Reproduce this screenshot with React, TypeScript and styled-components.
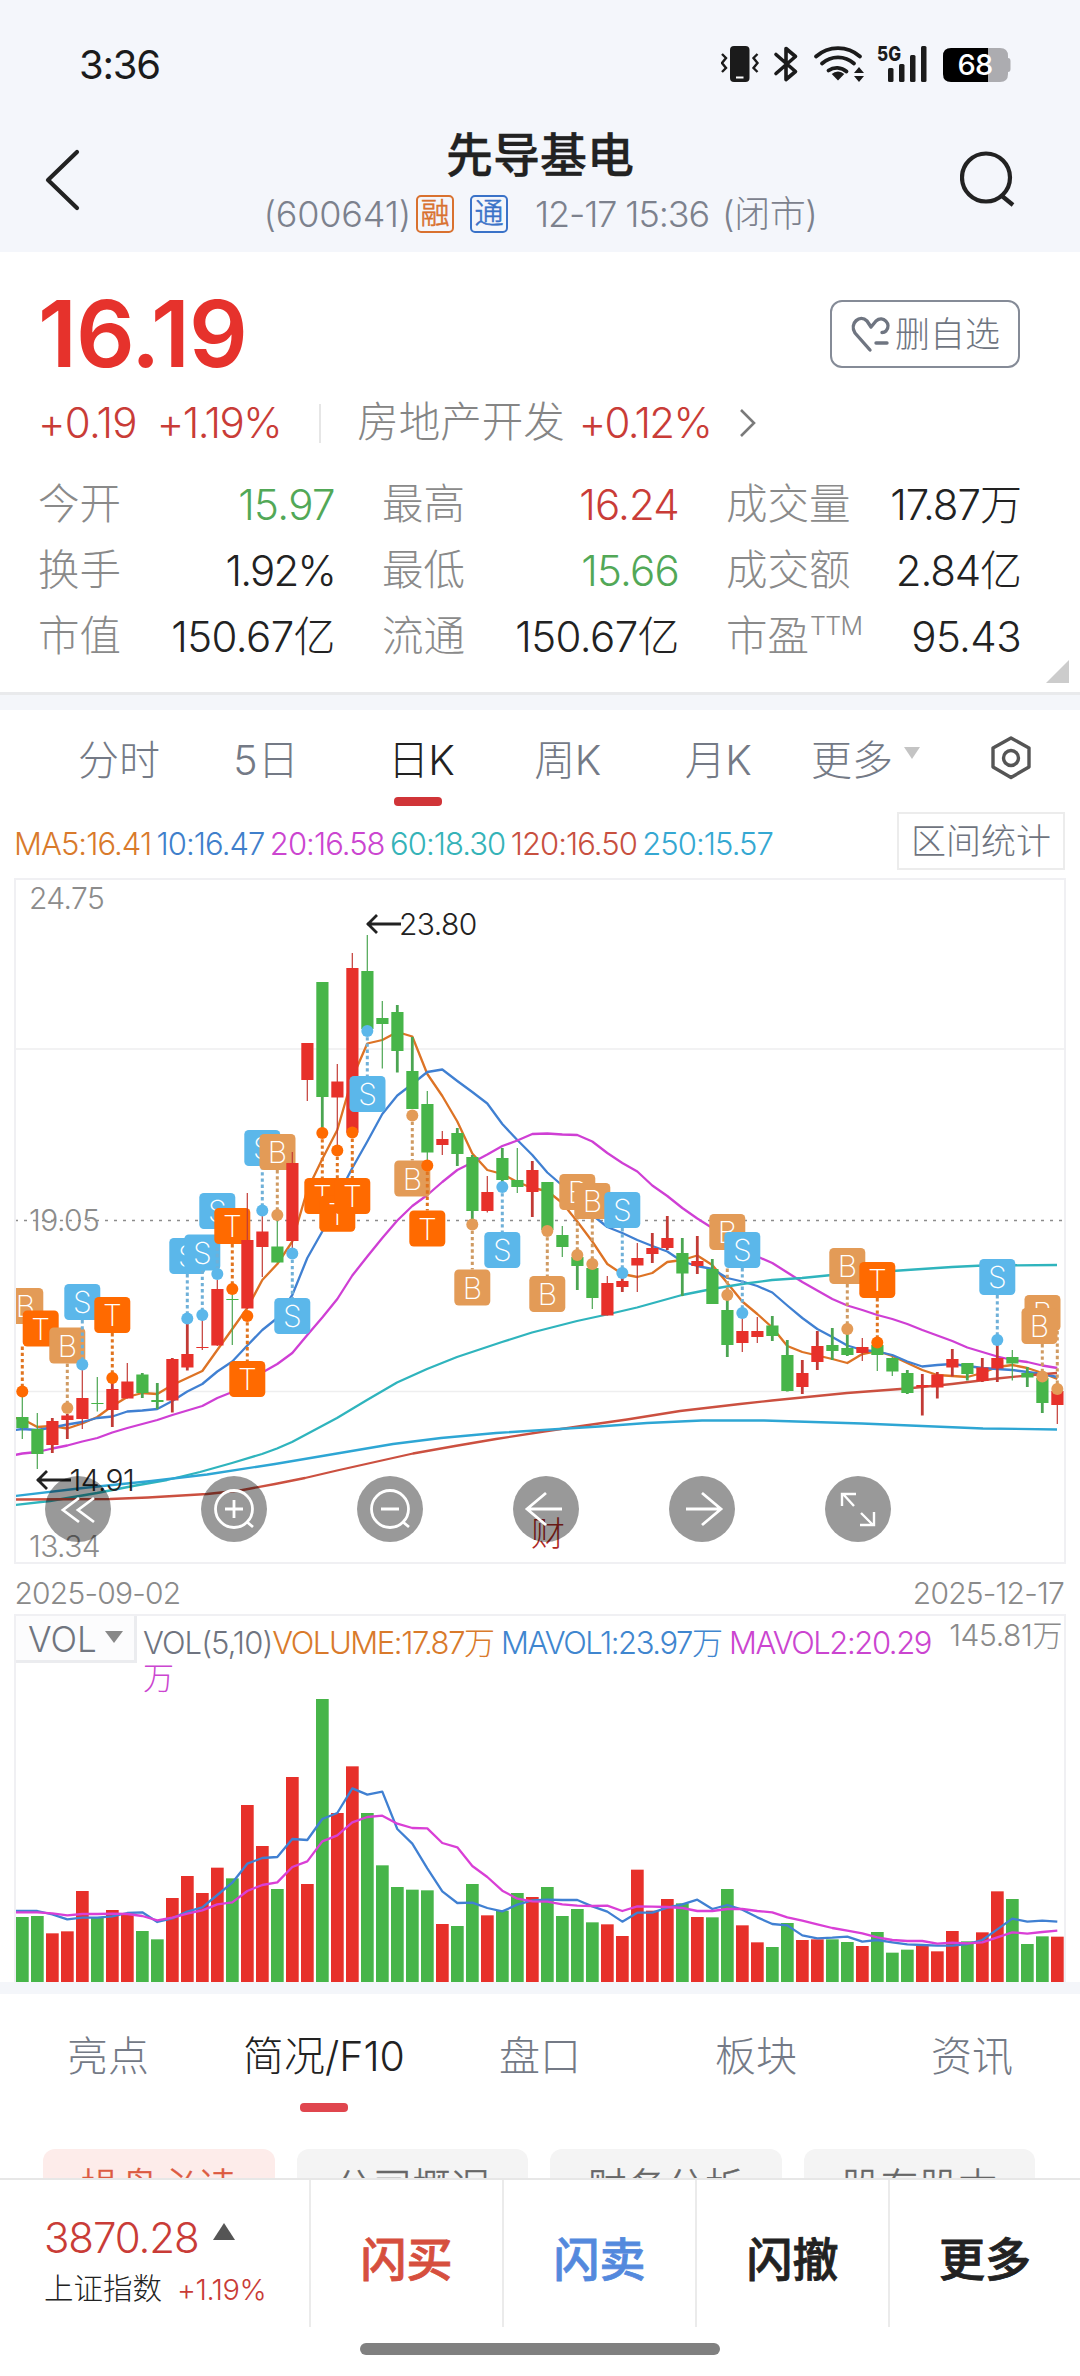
import React from "react";
import styled, { createGlobalStyle } from "styled-components";

const GlobalStyle = createGlobalStyle`
  * { box-sizing: border-box; }
  body {
    margin: 0;
    background: #fff;
    font-family: Inter, "Noto Sans CJK SC", sans-serif;
    font-weight: 300;
    color: #222;
  }
`;

const RED = "#c93c37";
const UP = "#e7302a";
const DOWN = "#47b549";
const GREEN = "#52a857";
const SLATE = "#747a86";

const Screen = styled.main`
  width: 1080px;
  height: 2376px;
  overflow: hidden;
  display: flex;
  flex-direction: column;
  background: #fff;
`;

const Text = styled.span<{ $size: number; $color?: string; $ls?: number; $weight?: number }>`
  display: block;
  height: 1em;
  font-size: ${(p) => p.$size}px;
  line-height: 1em;
  color: ${(p) => p.$color || "#222"};
  letter-spacing: ${(p) => p.$ls || 0}px;
  font-weight: ${(p) => p.$weight || 300};
  white-space: nowrap;
`;

/* ---------- header ---------- */

const Header = styled.header`
  height: 252px;
  background: #f4f6fb;
`;
const StatusBar = styled.div`
  height: 126px;
  padding: 4px 59px 0 79px;
  display: flex;
  align-items: center;
  justify-content: space-between;
`;
const NavBar = styled.div`
  height: 126px;
  display: grid;
  grid-template-columns: 120px 1fr 120px;
`;
const BackSlot = styled.div`
  padding: 22px 0 0 42px;
`;
const SearchSlot = styled.div`
  padding: 24px 0 0 0;
`;
const TitleBlock = styled.div`
  display: flex;
  flex-direction: column;
  align-items: center;
`;
const Title = styled.h1`
  margin: 0;
  font-size: 47px;
  line-height: 57px;
  font-weight: 500;
  color: #222;
  -webkit-text-stroke: 0.3px #222;
`;
const SubTitle = styled.div`
  display: flex;
  align-items: center;
  height: 61px;
  margin-left: 1px;
`;
const Tag = styled.span<{ $color: string; $ml: number }>`
  width: 38px;
  height: 38px;
  margin-left: ${(p) => p.$ml}px;
  border: 2px solid ${(p) => p.$color};
  border-radius: 5px;
  color: ${(p) => p.$color};
  font-size: 29px;
  font-weight: 300;
  line-height: 33px;
  text-align: center;
  -webkit-text-stroke: 0.6px ${(p) => p.$color};
`;
const Spacer = styled.i<{ $w: number }>`
  flex: none;
  width: ${(p) => p.$w}px;
`;

/* ---------- quote ---------- */

const Quote = styled.section`
  position: relative;
  height: 443px;
  padding: 32px 60px 0 38px;
  border-bottom: 3px solid #e9eaec;
`;
const PriceRow = styled.div`
  height: 100px;
  display: flex;
  align-items: center;
  justify-content: space-between;
`;
const FavButton = styled.button`
  width: 190px;
  height: 68px;
  display: flex;
  align-items: center;
  justify-content: center;
  gap: 5px;
  padding: 0;
  background: #fff;
  border: 2px solid #858b97;
  border-radius: 12px;
  font-family: inherit;
`;
const ChangeRow = styled.div`
  height: 78px;
  display: flex;
  align-items: center;
`;
const Rule = styled.i`
  width: 2px;
  height: 39px;
  margin: 0 36px 0 38px;
  background: #e6e6e6;
`;
const Stats = styled.div`
  margin-top: 10px;
  display: grid;
  grid-template-columns: 297px 297px 295px;
  column-gap: 47px;
`;
const Stat = styled.div`
  height: 66px;
  display: flex;
  align-items: center;
  justify-content: space-between;
`;
const Sup = styled.sup`
  font-size: 25px;
  line-height: 0;
  vertical-align: 16px;
  letter-spacing: -0.6px;
  margin-left: 1px;
`;
const Corner = styled.i`
  position: absolute;
  right: 11px;
  bottom: 9px;
  border-left: 23px solid transparent;
  border-bottom: 23px solid #ccc;
`;
const Band = styled.div<{ $h: number }>`
  flex: none;
  height: ${(p) => p.$h}px;
  background: #f4f6fa;
`;

/* ---------- period tabs ---------- */

const PeriodTabs = styled.nav`
  height: 100px;
  display: grid;
  grid-template-columns: 148px 146px 164px 129px 172px 127px 1fr;
  padding-left: 45px;
`;
const Tab = styled.div<{ $active?: boolean; $h: number; $ls?: number }>`
  display: flex;
  flex-direction: column;
  align-items: center;
  height: ${(p) => p.$h}px;
  font-size: 41px;
  line-height: ${(p) => p.$h}px;
  letter-spacing: ${(p) => p.$ls || 0}px;
  white-space: nowrap;
  color: ${(p) => (p.$active ? "#222" : SLATE)};
`;
const Indicator = styled.i<{ $color: string; $up: number; $shift?: number }>`
  width: 48px;
  height: 9px;
  flex: none;
  margin: -${(p) => p.$up}px ${(p) => p.$shift || 0}px 0 0;
  border-radius: 4px;
  background: ${(p) => p.$color};
`;
const MoreTab = styled.div`
  display: flex;
  align-items: center;
  gap: 11px;
  padding-left: 7px;
`;
const Caret = styled.i<{ $w: number; $h: number; $color: string; $up?: boolean; $mb?: number }>`
  border-left: ${(p) => p.$w / 2}px solid transparent;
  border-right: ${(p) => p.$w / 2}px solid transparent;
  ${(p) => (p.$up ? "border-bottom" : "border-top")}: ${(p) => p.$h}px solid ${(p) => p.$color};
  margin-bottom: ${(p) => p.$mb || 0}px;
`;
const GearSlot = styled.div`
  display: flex;
  align-items: center;
  padding: 0 0 4px 58px;
`;

const LegendRow = styled.div`
  height: 68px;
  display: flex;
  justify-content: space-between;
  align-items: flex-start;
  padding: 2px 15px 0 14px;
`;
const Legend = styled.div`
  display: flex;
  align-items: center;
  gap: 5.4px;
  height: 62px;
`;
const RangeButton = styled.button`
  width: 168px;
  height: 58px;
  padding: 0;
  display: grid;
  place-items: center;
  background: #fff;
  border: 2px solid #ececec;
  font-family: inherit;
`;

/* ---------- charts ---------- */

const PricePanel = styled.div`
  position: relative;
  height: 686px;
  margin: 0 14px;
  border: 2px solid #f0f0f3;
`;
const Canvas = styled.svg`
  display: block;
`;
const Controls = styled.div`
  position: absolute;
  left: 29px;
  top: 596px;
  display: flex;
  gap: 90px;
`;
const RoundButton = styled.button`
  width: 66px;
  height: 66px;
  padding: 0;
  border: 0;
  border-radius: 50%;
  background: rgba(0, 0, 0, 0.4);
  display: grid;
  place-items: center;
`;
const DateRow = styled.div`
  height: 50px;
  display: flex;
  justify-content: space-between;
  align-items: center;
  padding: 7px 16px 0 14.5px;
`;
const VolumePanel = styled.div`
  height: 368px;
  margin: 0 14px;
  border: 2px solid #f0f0f3;
  border-bottom: 0;
`;
const VolumeHead = styled.div`
  height: 78px;
  display: flex;
  align-items: flex-start;
`;
const VolumeSelect = styled.div`
  width: 121px;
  height: 47px;
  flex: none;
  display: flex;
  align-items: center;
  gap: 8px;
  padding: 2px 0 0 12px;
  border: solid #ebecef;
  border-width: 0 3px 3px 0;
  background: #fcfcfd;
`;
const VolumeLegend = styled.div`
  width: 797px;
  flex: none;
  padding: 9px 0 0 6px;
  font-size: 31px;
  line-height: 35px;
  letter-spacing: -1.42px;
`;
const Hue = styled.span<{ $color: string; $ls?: number }>`
  color: ${(p) => p.$color};
  ${(p) => (p.$ls ? `letter-spacing: ${p.$ls}px;` : "")}
`;
const VolumeMax = styled.div`
  flex: 1;
  display: flex;
  justify-content: flex-end;
  padding: 4px 2px 0 0;
`;

/* ---------- bottom ---------- */

const InfoSection = styled.section`
  height: 184px;
  overflow: hidden;
`;
const InfoTabs = styled.nav`
  display: grid;
  grid-template-columns: repeat(5, 216px);
  height: 155px;
`;
const Chips = styled.div`
  display: grid;
  grid-template-columns: repeat(4, 231.5px);
  column-gap: 22px;
  padding-left: 43px;
`;
const Chip = styled.div<{ $active?: boolean }>`
  height: 76px;
  border-radius: 12px;
  line-height: 76px;
  text-align: center;
  font-size: 39px;
  -webkit-text-stroke: 0.5px currentColor;
  color: ${(p) => (p.$active ? "#dc5a40" : "#666")};
  background: ${(p) => (p.$active ? "#fdecea" : "#f4f4f4")};
`;
const BottomBar = styled.footer`
  height: 149px;
  border-top: 2px solid #e7e7e7;
  display: grid;
  grid-template-columns: 309px 193px 193px 193px 192px;
`;
const IndexCell = styled.div`
  padding: 32px 0 0 44px;
`;
const IndexLine = styled.div<{ $h: number; $gap: number }>`
  height: ${(p) => p.$h}px;
  display: flex;
  align-items: center;
  gap: ${(p) => p.$gap}px;
`;
const Action = styled.div<{ $color: string }>`
  border-left: 2px solid #ebebeb;
  height: 147px;
  line-height: 159px;
  text-align: center;
  font-size: 46px;
  font-weight: 500;
  -webkit-text-stroke: 0.8px currentColor;
  color: ${(p) => p.$color};
`;
const HomeBar = styled.i`
  display: block;
  width: 360px;
  height: 12px;
  margin: 16px auto 0;
  border-radius: 6px;
  background: #808080;
`;

/* ---------- data ---------- */

// [up, wickTop, bodyTop, bodyBottom, wickBottom, wickWidth]
const candles: [number, number, number, number, number, number][] = [
  [0, 1397, 1417, 1428, 1439, 1], [0, 1413, 1429, 1454, 1469, 1], [1, 1418, 1421, 1445, 1453, 3],
  [1, 1414, 1415.5, 1420, 1439, 3], [1, 1370, 1398, 1419, 1429, 1], [0, 1377, 1403, 1404, 1411.5, 1],
  [1, 1382, 1389, 1410, 1427, 3], [1, 1363, 1381.5, 1398.5, 1398.5, 1], [0, 1373, 1374.5, 1393, 1398, 3],
  [0, 1383, 1400, 1402, 1409, 3], [1, 1358, 1359, 1400.5, 1412.5, 3], [1, 1323, 1354, 1367.5, 1370.5, 3],
  [1, 1320, 1347, 1348, 1350, 1], [1, 1280, 1289, 1345.5, 1346, 1], [0, 1293, 1299, 1300, 1345, 1],
  [1, 1193, 1240, 1308.5, 1309, 1], [1, 1215, 1231.5, 1247, 1277, 1], [0, 1220, 1246.5, 1262.5, 1262.5, 1],
  [1, 1152, 1163, 1241, 1248, 1], [1, 1043, 1043, 1080, 1101, 1], [0, 982, 982, 1097, 1130, 3],
  [1, 1064, 1081.5, 1097.5, 1148, 1], [1, 953, 968, 1132.5, 1132.5, 1], [0, 935, 971, 1029, 1030, 1],
  [0, 1001, 1018, 1024, 1068.5, 1], [0, 1005, 1012, 1051, 1072.5, 3], [0, 1037, 1071, 1109, 1109, 3],
  [0, 1091, 1104, 1152.5, 1163, 1], [1, 1131, 1139, 1145, 1155, 1], [0, 1128, 1133, 1154, 1166, 3],
  [0, 1155, 1157, 1211, 1219, 3], [1, 1176, 1192, 1211, 1212.5, 1], [0, 1148, 1158, 1180, 1182, 3],
  [0, 1148, 1180, 1187, 1193, 1], [1, 1161, 1170, 1192, 1217, 3], [0, 1182, 1182, 1230, 1230, 1],
  [0, 1226, 1235, 1247, 1257, 1], [0, 1257, 1257, 1266, 1290, 3], [0, 1267, 1268, 1298, 1309, 1],
  [1, 1276, 1283, 1315.5, 1315.5, 1], [1, 1277, 1281, 1287, 1292, 3], [1, 1243, 1258, 1265.5, 1292, 1],
  [1, 1233, 1248, 1254, 1263, 3], [1, 1216, 1238, 1248, 1250, 3], [0, 1238, 1253, 1273.5, 1296, 3],
  [1, 1236, 1261, 1266, 1274, 3], [0, 1259, 1269, 1304, 1304, 3], [0, 1295, 1310, 1345, 1357, 3],
  [1, 1313, 1331, 1343, 1352, 1], [1, 1317, 1331, 1337, 1343, 1], [0, 1316, 1325.5, 1336, 1341, 3],
  [0, 1340, 1355, 1391, 1391.5, 3], [1, 1360, 1373, 1387, 1394, 3], [1, 1331, 1346, 1362, 1370, 3],
  [0, 1328, 1345, 1351, 1360, 3], [0, 1333, 1348, 1355, 1356, 3], [1, 1338, 1347, 1353, 1361, 1],
  [0, 1343, 1345, 1355, 1371, 1], [0, 1357, 1358, 1371.5, 1376, 1], [0, 1370, 1373, 1393, 1394, 3],
  [1, 1374, 1385, 1387, 1415.5, 3], [1, 1372, 1374.5, 1387.5, 1398.5, 3], [1, 1349, 1359, 1367.5, 1376.5, 3],
  [0, 1363, 1363, 1374, 1380.5, 3], [1, 1358, 1367.5, 1381, 1382, 3], [1, 1345, 1358, 1368.5, 1382, 3],
  [0, 1350, 1357, 1363.5, 1380.5, 1], [0, 1367, 1373, 1377.5, 1387, 3], [0, 1377, 1378, 1403, 1413, 3],
  [1, 1390, 1391, 1405, 1424, 1],
];

type Mark = { i: number; k: "S" | "B" | "T"; x: number; top: number; dot?: number };
const marks: Mark[] = [
  { i: 0, k: "B", x: 25.3, top: 1288 }, { i: 0, k: "T", x: 40.7, top: 1310.5, dot: 1391.4 },
  { i: 3, k: "B", x: 67.3, top: 1327.5, dot: 1408 }, { i: 4, k: "S", x: 82.3, top: 1284, dot: 1364.6 },
  { i: 6, k: "T", x: 112.3, top: 1297, dot: 1378 }, { i: 11, k: "S", x: 187.3, top: 1238, dot: 1318.5 },
  { i: 12, k: "S", x: 202.3, top: 1234.5, dot: 1315 }, { i: 13, k: "S", x: 217.3, top: 1193, dot: 1274 },
  { i: 14, k: "T", x: 232.3, top: 1208, dot: 1289 }, { i: 15, k: "T", x: 247.3, top: 1361, dot: 1316 },
  { i: 16, k: "S", x: 262.3, top: 1130, dot: 1210.5 }, { i: 17, k: "B", x: 277.5, top: 1134, dot: 1215 },
  { i: 18, k: "S", x: 292.3, top: 1298, dot: 1253.5 }, { i: 20, k: "T", x: 322.3, top: 1178, dot: 1133 },
  { i: 21, k: "T", x: 337.3, top: 1195.7, dot: 1150.5 }, { i: 22, k: "T", x: 352.3, top: 1178, dot: 1132.5 },
  { i: 23, k: "S", x: 367.5, top: 1076, dot: 1031 }, { i: 26, k: "B", x: 412.3, top: 1160.5, dot: 1115.5 },
  { i: 27, k: "T", x: 427.3, top: 1210.5, dot: 1165.5 }, { i: 30, k: "B", x: 472.3, top: 1269.5, dot: 1224.5 },
  { i: 32, k: "S", x: 502.3, top: 1232, dot: 1187 }, { i: 35, k: "B", x: 547.3, top: 1276, dot: 1231 },
  { i: 37, k: "B", x: 577.3, top: 1174, dot: 1255 }, { i: 38, k: "B", x: 592.3, top: 1183, dot: 1264 },
  { i: 40, k: "S", x: 622.3, top: 1192, dot: 1273 }, { i: 47, k: "B", x: 727.3, top: 1214, dot: 1295 },
  { i: 48, k: "S", x: 742.3, top: 1232, dot: 1313 }, { i: 55, k: "B", x: 847.3, top: 1248, dot: 1329 },
  { i: 57, k: "T", x: 877.3, top: 1262, dot: 1342.5 }, { i: 65, k: "S", x: 997.3, top: 1259, dot: 1340 },
  { i: 69, k: "B", x: 1042.5, top: 1295, dot: 1389 }, { i: 68, k: "B", x: 1039.5, top: 1308, dot: 1376.5 },
];
const markColor = { S: "#5bb7ea", B: "#e39b57", T: "#ff6a00" };
const stemColor = { S: "#6fb0d8", B: "#cf9a62", T: "#e0741f" };

const ma5 = [1419, 1427, 1426, 1428.5, 1423.5, 1417, 1406, 1397, 1393, 1394, 1385, 1378, 1371, 1350, 1329, 1308, 1280, 1264, 1241.5, 1190, 1159, 1130, 1078, 1043.5, 1040, 1032, 1036.5, 1074, 1096, 1121.5, 1153.5, 1170, 1174, 1182, 1188, 1191, 1203, 1221.5, 1241.5, 1264, 1274, 1277, 1273, 1262, 1260, 1255.5, 1265, 1283, 1301.5, 1314, 1327.5, 1346, 1352, 1355.5, 1359, 1363, 1354, 1351, 1356, 1363, 1370, 1375, 1376, 1377, 1373, 1367, 1365, 1368, 1373, 1379];
const ma10 = [1429, 1430, 1427.5, 1424.5, 1422, 1418, 1416.5, 1411.5, 1410.5, 1409, 1401, 1391.5, 1384, 1371.5, 1361.5, 1345.5, 1330, 1318, 1295, 1258, 1231.5, 1197, 1168, 1141.5, 1114, 1095.5, 1084, 1072, 1069.5, 1081, 1092, 1103.5, 1124, 1140, 1155, 1172.5, 1185.5, 1198, 1215, 1227, 1233, 1240, 1246, 1251.5, 1261.5, 1266, 1269, 1278, 1281.5, 1286, 1292.5, 1305.5, 1318, 1329, 1337, 1345.5, 1350, 1351.5, 1355, 1361.5, 1366.5, 1365, 1364, 1366, 1368, 1369, 1370, 1372, 1374, 1377];
const ma20 = [1453.5, 1452, 1448.5, 1445.5, 1441.5, 1438, 1432.5, 1428, 1424, 1420, 1415, 1410.5, 1406, 1398, 1392, 1383, 1372.5, 1364, 1353, 1335, 1317.5, 1299, 1275.5, 1256.5, 1238, 1220.5, 1206, 1195, 1182, 1170, 1162.5, 1154.5, 1146, 1140.5, 1134, 1133.5, 1134.5, 1135, 1141.5, 1153, 1163, 1171.5, 1185.5, 1196, 1208, 1218.5, 1228, 1240, 1250, 1256.5, 1263, 1272.5, 1282, 1290.5, 1299, 1305.5, 1310, 1315, 1319, 1324, 1330, 1335.5, 1341, 1347.5, 1352, 1356.5, 1360, 1362, 1365.5, 1368];

const ma60 = "15,1505 50,1501 97,1493 133,1486 167,1480 200,1472 232,1463 262,1454 277,1448.5 292,1442 322,1426 337,1418 367,1400 397,1382.5 427,1369 457,1357 472,1352 502,1342 532,1332.5 577,1321 607,1314.5 637,1307.5 682,1295 712,1289 742,1284 772,1280 802,1278 832,1275 907,1270 952,1267 983,1265.5 1057,1265";
const ma120 = "15,1499.5 110,1499 148,1497.5 207,1494 240,1490.5 275,1484 305,1478 337,1470.5 375,1462 413,1453.5 455,1446 496,1439 544,1431.5 585,1425.5 627,1419.5 680,1411 740,1404 772,1400.5 847,1393 907,1388.5 952,1384 997,1378.5 1027,1375.5 1057,1373";
const ma250 = "15,1496 83,1488 151.5,1481 207,1474.5 275,1464 337,1453.5 393,1444 441,1438 496,1433 551,1429.5 599,1426.5 647,1423 702,1420.5 764,1420.5 862,1423.5 910,1425.5 983,1428.5 1057,1429.5";

const volTop = [831, 828, 880, 874, 753, 832, 810, 825, 873, 898, 774, 708, 759, 683, 715, 495, 618, 747, 411, 732, 177, 519, 379, 519, 676, 741, 749, 751, 852, 858, 732, 826, 812, 759, 771, 741, 828, 807, 847, 853, 888, 689, 812, 777, 790, 831, 832, 747, 856, 907, 921, 849, 900, 898, 898, 906, 918, 876, 938, 929, 918, 934, 873, 904, 877, 754, 777, 912, 889, 890];
const volColors = "GGRRRGRRGGRRRRGRRGRRGRRGGGGGRGGRGGRGGGGRRRRRGRGGRRGGRRGGRGGGRRRGRRGGGR".split("");
volColors[39] = "R";
const vma5 = [813, 813, 823, 838, 833, 833, 829, 819, 817, 846, 835, 815, 802, 765, 728, 671, 654, 651, 597, 600, 537, 519, 445, 464, 455, 567, 611, 685, 754, 789, 788, 804, 814, 794, 781, 779, 780, 780, 799, 815, 845, 818, 818, 803, 793, 779, 807, 795, 809, 832, 852, 856, 886, 895, 893, 890, 905, 900, 907, 913, 915, 917, 917, 912, 900, 868, 836, 845, 842, 845];
const vma10 = [817, 817, 820, 826, 822, 822, 821, 822, 828, 841, 833, 821, 811, 793, 787, 753, 735, 727, 681, 664, 604, 586, 547, 531, 527, 551, 564, 565, 609, 622, 678, 711, 752, 776, 784, 785, 793, 797, 798, 797, 813, 799, 800, 801, 804, 813, 813, 807, 807, 813, 817, 832, 842, 853, 864, 872, 880, 892, 900, 903, 903, 911, 908, 910, 907, 892, 877, 881, 876, 872];

const cx = (i: number) => 22.3 + 15 * i;
const path = (start: number, ys: number[]) => `15,${start} ` + ys.map((y, i) => `${cx(i)},${y}`).join(" ");
const vy = (v: number) => 1640 + v / 3;

/* ---------- pieces ---------- */

const Marker = ({ m }: { m: Mark }) => {
  const x = cx(m.i);
  const c = markColor[m.k];
  const above = m.dot !== undefined && m.dot > m.top;
  return (
    <g>
      {m.dot !== undefined && (
        <>
          <line x1={x} x2={x} y1={above ? m.top + 36 : m.dot} y2={above ? m.dot : m.top} stroke={stemColor[m.k]} strokeWidth={3} strokeDasharray="3.4 2.8" />
          <circle cx={x} cy={m.dot} r={6} fill={c} />
        </>
      )}
      <rect x={m.x - 18} y={m.top} width={36} height={36} rx={4.5} fill={c} />
      <text x={m.x} y={m.top + 29.3} fontSize={30} fontWeight={200} fill="#fff" textAnchor="middle">{m.k}</text>
    </g>
  );
};

const PriceChart = () => (
  <Canvas width={1048} height={682} viewBox="16 880 1048 682">
    <g stroke="#eeeeef" strokeWidth={1.5}>
      <line x1={15} x2={1065} y1={1049} y2={1049} />
      <line x1={15} x2={1065} y1={1391.5} y2={1391.5} />
    </g>
    <line x1={15} x2={1065} y1={1220.5} y2={1220.5} stroke="#8c8c8c" strokeWidth={1.3} strokeDasharray="3 6" />
    <g fill="none" strokeWidth={2.3} strokeLinejoin="round">
      <polyline points={path(1418, ma5)} stroke="#dd7325" />
      <polyline points={path(1430, ma10)} stroke="#4080d2" />
      <polyline points={path(1455, ma20)} stroke="#cf3fd4" />
      <polyline points={ma60} stroke="#2fb4bd" />
      <polyline points={ma120} stroke="#cb5040" />
      <polyline points={ma250} stroke="#2ea6d4" />
    </g>
    {candles.map(([up, wt, bt, bb, wb, w], i) => (
      <g key={i}>
        <line x1={cx(i)} x2={cx(i)} y1={wt} y2={wb} stroke={up ? "#c23a35" : "#4ba552"} strokeWidth={w === 1 ? 1.2 : 2.8} />
        <rect x={cx(i) - 6} y={bt} width={12.2} height={Math.max(bb - bt, 1)} fill={up ? UP : DOWN} />
        {marks.filter((m) => m.i === i && i < 68).map((m) => <Marker key={m.k} m={m} />)}
      </g>
    ))}
    {marks.filter((m) => m.i >= 68).map((m) => <Marker key={m.i} m={m} />)}
    <g fontSize={30} fill="#8c8c8c" letterSpacing={-0.6}>
      <text x={29} y={909}>24.75</text>
      <text x={29} y={1231}>19.05</text>
      <text x={29} y={1557}>13.34</text>
    </g>
    <g stroke="#222" strokeWidth={2.8} fill="none">
      <path d="M401 924H367M377 915l-9 9 9 9" />
      <path d="M71 1480H37M47 1471l-9 9 9 9" />
    </g>
    <g fontSize={30} fill="#222" letterSpacing={-0.6}>
      <text x={399} y={935}>23.80</text>
      <text x={69.5} y={1491}>14.91</text>
    </g>
    <text x={531} y={1546} fontSize={34} fill="#b02a25">财</text>
  </Canvas>
);

const VolumeChart = () => (
  <Canvas width={1048} height={288} viewBox="16 1694 1048 288">
    {volTop.map((v, i) => (
      <rect key={i} x={cx(i) - 6.3} y={vy(v)} width={12.7} height={1982 - vy(v)} fill={volColors[i] === "R" ? UP : DOWN} />
    ))}
    <g fill="none" strokeWidth={2.3} strokeLinejoin="round">
      <polyline points={path(vy(813), vma5.map(vy))} stroke="#4080d2" />
      <polyline points={path(vy(817), vma10.map(vy))} stroke="#d93fd6" />
    </g>
  </Canvas>
);

const StatusIcons = () => (
  <svg width="300" height="42" viewBox="0 0 300 42" fill="none">
    <g stroke="#1b1b1b" strokeWidth="2.4">
      <path d="M1 10l4 4-4 5 4 5-4 4M36.5 10l-4 4 4 5-4 5 4 4" />
    </g>
    <rect x="9" y="2" width="19.500" height="36" rx="4" fill="#1b1b1b" />
    <rect x="15" y="32.500" width="7.500" height="2" fill="#fff" />
    <path d="M55 10.500L74.500 27.500 65 35.500V4.500L74.500 12.500 55 29.500" stroke="#1b1b1b" strokeWidth="3.600" strokeLinejoin="round" strokeLinecap="round" />
    <g stroke="#1b1b1b" strokeWidth="3.800" strokeLinecap="round">
      <path d="M95 12.500a33 33 0 0 1 44 0" />
      <path d="M101 19.500a24 24 0 0 1 32 0" />
      <path d="M107.500 26.500a14.500 14.500 0 0 1 18 1" />
    </g>
    <path d="M117 36.500l-6.300-6.500a9 9 0 0 1 12.600 0z" fill="#1b1b1b" />
    <path d="M133 29l5-6 5 6zM133 32h10l-5 6z" fill="#1b1b1b" />
    <text x="156" y="17" fontSize="20.500" fontWeight="800" fill="#1b1b1b" textLength="24" lengthAdjust="spacingAndGlyphs">5G</text>
    <g fill="#1b1b1b">
      <rect x="167" y="24" width="5.500" height="14" rx="1.500" />
      <rect x="178" y="20" width="5.500" height="18" rx="1.500" />
      <rect x="189" y="11" width="5.500" height="27" rx="1.500" />
      <rect x="200" y="2" width="5.500" height="36" rx="1.500" />
    </g>
    <path d="M267 4h12q8 0 8 8v2q2.500 0 2.500 3v8q0 3-2.500 3v2q0 8-8 8h-12z" fill="#acacb0" />
    <path d="M230 4h37v34h-37q-8 0-8-8V12q0-8 8-8z" fill="#000" />
    <text x="254" y="31" fontSize="29" fontWeight="500" fill="#fff" textAnchor="middle" letterSpacing="-0.800">68</text>
  </svg>
);

const controlIcons = [
  <path d="M34 14L18 26l16 12M49 14L33 26l16 12" />,
  <><circle cx="33" cy="25" r="18.500" /><path d="M33 16v18M24 25h18M46 38l6 5" /></>,
  <><circle cx="33" cy="25" r="18.500" /><path d="M24 25h18M46 38l6 5" /></>,
  <path d="M49 25H14M33 9L14 25l19 16" />,
  <path d="M17 25h35M33 9l19 16-19 16" />,
  <path d="M17 22V10h14M18 10l11 12M49 28v13H35M48 41L36 29" strokeWidth="2.400" />,
];

const stats: [React.ReactNode, string, string, number][] = [
  ["今开", "15.97", GREEN, -0.6], ["最高", "16.24", RED, -0.8], ["成交量", "17.87万", "#222", -1],
  ["换手", "1.92%", "#222", -1.8], ["最低", "15.66", GREEN, -0.8], ["成交额", "2.84亿", "#222", -1.1],
  ["市值", "150.67亿", "#222", -0.6], ["流通", "150.67亿", "#222", -0.6],
  [<>市盈<Sup>TTM</Sup></>, "95.43", "#222", -0.6],
];

const maLegend: [string, string][] = [
  ["MA5:16.41", "#d97a2b"], ["10:16.47", "#3f7fcb"], ["20:16.58", "#cb45d0"],
  ["60:18.30", "#35b3b8"], ["120:16.50", "#c8503f"], ["250:15.57", "#35a8d2"],
];

export default function App() {
  return (
    <Screen>
      <GlobalStyle />
      <Header>
        <StatusBar>
          <Text $size={40} $weight={400} $ls={-1.2} $color="#1b1b1b">3:36</Text>
          <StatusIcons />
        </StatusBar>
        <NavBar>
          <BackSlot>
            <svg width="40" height="64" viewBox="0 0 40 64" fill="none" stroke="#222" strokeWidth="4.200">
              <path d="M35 4L6 32l29 28" strokeLinecap="round" strokeLinejoin="round" />
            </svg>
          </BackSlot>
          <TitleBlock>
            <Title>先导基电</Title>
            <SubTitle>
              <Text $size={36} $color="#7c818d" $ls={-0.2}>(600641)</Text>
              <Tag $color="#d9712f" $ml={5}>融</Tag>
              <Tag $color="#3a72c8" $ml={16}>通</Tag>
              <Spacer $w={27} />
              <Text $size={36} $color="#7c818d" $ls={-1.1}>12-17 15:36</Text>
              <Spacer $w={13} />
              <Text $size={36} $color="#7c818d" $ls={-0.4}>(闭市)</Text>
            </SubTitle>
          </TitleBlock>
          <SearchSlot>
            <svg width="60" height="60" viewBox="0 0 60 60" fill="none" stroke="#222" strokeWidth="4.200">
              <circle cx="26" cy="27.500" r="24" />
              <path d="M42 46l11 9" />
            </svg>
          </SearchSlot>
        </NavBar>
      </Header>

      <Quote>
        <PriceRow>
          <Text $size={92} $weight={600} $color="#e6322c" $ls={-1}>16.19</Text>
          <FavButton>
            <svg width="40" height="38" viewBox="0 0 40 38" fill="none" stroke="#6f7581" strokeWidth="3.400" strokeLinecap="round" strokeLinejoin="round">
              <path d="M20 35L5 18C-1 8 10-1 17 6l4 6 5-6c7-6 16 3 10 10q-1.500 1.500-4 1.500M26 28h11" />
            </svg>
            <Text $size={35} $color="#6f7581">删自选</Text>
          </FavButton>
        </PriceRow>
        <ChangeRow>
          <Text $size={42} $color={RED} $ls={-0.7}>+0.19</Text>
          <Spacer $w={20} />
          <Text $size={42} $color={RED} $ls={-1.5}>+1.19%</Text>
          <Rule />
          <Text $size={41.500} $color="#858585">房地产开发</Text>
          <Spacer $w={14} />
          <Text $size={42} $color={RED} $ls={-1.6}>+0.12%</Text>
          <Spacer $w={28} />
          <svg width="18" height="28" viewBox="0 0 18 28" fill="none" stroke="#7a7a7a" strokeWidth="2.600">
            <path d="M2 1l13 13L2 27" />
          </svg>
        </ChangeRow>
        <Stats>
          {stats.map(([label, value, color, ls], i) => (
            <Stat key={i}>
              <Text $size={41.500} $color="#8a8a8a">{label}</Text>
              <Text $size={42} $color={color} $ls={ls}>{value}</Text>
            </Stat>
          ))}
        </Stats>
        <Corner />
      </Quote>
      <Band $h={15} />

      <PeriodTabs>
        <Tab $h={100}>分时</Tab>
        <Tab $h={100}>5日</Tab>
        <Tab $h={100} $ls={-0.8} $active>日K<Indicator $color="#d03438" $up={13} $shift={6} /></Tab>
        <Tab $h={100} $ls={-0.4}>周K</Tab>
        <Tab $h={100} $ls={-0.4}>月K</Tab>
        <MoreTab>
          <Text $size={41} $color={SLATE}>更多</Text>
          <Caret $w={17} $h={12} $color="#c4c4c4" $mb={15} />
        </MoreTab>
        <GearSlot>
          <svg width="44" height="48" viewBox="0 0 44 48" fill="none" stroke="#555" strokeWidth="3.400">
            <path d="M22 4L40 14V33L22 43.500 4 33V14z" strokeLinejoin="round" />
            <circle cx="22" cy="24" r="7.500" />
          </svg>
        </GearSlot>
      </PeriodTabs>

      <LegendRow>
        <Legend>
          {maLegend.map(([t, c]) => <Text key={t} $size={31} $color={c} $ls={-0.95}>{t}</Text>)}
        </Legend>
        <RangeButton><Text $size={35} $color="#6f7480">区间统计</Text></RangeButton>
      </LegendRow>

      <PricePanel>
        <PriceChart />
        <Controls>
          {controlIcons.map((icon, i) => (
            <RoundButton key={i}>
              <svg width="66" height="66" viewBox="0 -8 66 66" fill="none" stroke="#fff" strokeWidth="2.800">{icon}</svg>
            </RoundButton>
          ))}
        </Controls>
      </PricePanel>
      <DateRow>
        <Text $size={30} $color="#8a8a8a" $ls={-0.8}>2025-09-02</Text>
        <Text $size={30} $color="#8a8a8a" $ls={-0.8}>2025-12-17</Text>
      </DateRow>

      <VolumePanel>
        <VolumeHead>
          <VolumeSelect>
            <Text $size={35} $color="#70757f">VOL</Text>
            <Caret $w={18} $h={12} $color="#888" $mb={4} />
          </VolumeSelect>
          <VolumeLegend>
            <Hue $color="#6f7480" $ls={-0.9}>VOL(5,10)</Hue>
            <Hue $color="#d97a2b">VOLUME:17.87万</Hue>{" "}
            <Hue $color="#3f86cf">MAVOL1:23.97万</Hue>{" "}
            <Hue $color="#cb45d0">MAVOL2:20.29万</Hue>
          </VolumeLegend>
          <VolumeMax><Text $size={30} $color="#8a8a8a" $ls={-0.4}>145.81万</Text></VolumeMax>
        </VolumeHead>
        <VolumeChart />
      </VolumePanel>
      <Band $h={12} />

      <InfoSection>
        <InfoTabs>
          <Tab $h={124}>亮点</Tab>
          <Tab $h={124} $active>简况/F10<Indicator $color="#e0464e" $up={15} /></Tab>
          <Tab $h={124}>盘口</Tab>
          <Tab $h={124}>板块</Tab>
          <Tab $h={124}>资讯</Tab>
        </InfoTabs>
        <Chips>
          <Chip $active>操盘必读</Chip>
          <Chip>公司概况</Chip>
          <Chip>财务分析</Chip>
          <Chip>股东股本</Chip>
        </Chips>
      </InfoSection>

      <BottomBar>
        <IndexCell>
          <IndexLine $h={52} $gap={15}>
            <Text $size={42} $color={RED} $ls={-1.1}>3870.28</Text>
            <Caret $up $w={22} $h={17} $color="#555" $mb={13} />
          </IndexLine>
          <IndexLine $h={50} $gap={15}>
            <Text $size={29.500}>上证指数</Text>
            <Text $size={29} $color={RED} $ls={-0.5}>+1.19%</Text>
          </IndexLine>
        </IndexCell>
        <Action $color="#d64f3e">闪买</Action>
        <Action $color="#5489dd">闪卖</Action>
        <Action $color="#222">闪撤</Action>
        <Action $color="#222">更多</Action>
      </BottomBar>
      <HomeBar />
    </Screen>
  );
}
